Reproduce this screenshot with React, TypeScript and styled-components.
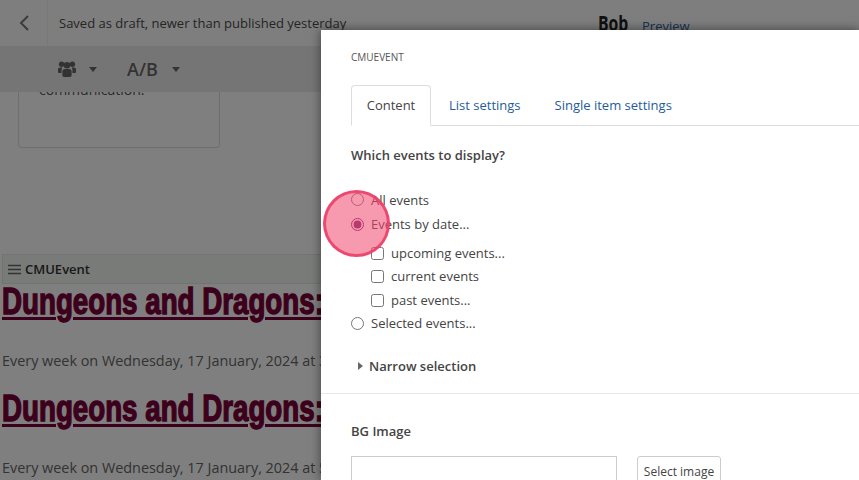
import React from "react";
import styled, { createGlobalStyle } from "styled-components";

const GlobalStyle = createGlobalStyle`
  html, body {
    margin: 0;
    height: 100%;
    overflow: hidden;
    background: #fff;
    font-family: "Open Sans", "Liberation Sans", sans-serif;
  }
`;

/* Page behind the dialog */
const Page = styled.div`
  position: relative;
  width: 859px;
  height: 480px;
  overflow: hidden;
  color: #555;
`;

const TopBar = styled.header`
  display: flex;
  align-items: center;
  height: 46px;
  background: #fdfdfd;
`;

const BackCell = styled.div`
  display: flex;
  align-items: center;
  justify-content: center;
  width: 48px;
  height: 46px;
  border-right: 1px solid #f0f0f0;
  box-sizing: border-box;
`;

const Status = styled.span`
  margin-left: 11px;
  font-size: 13px;
  width: 539px;
  white-space: nowrap;
  color: #4a4a4a;
`;

const Bob = styled.span`
  display: inline-block;
  width: 44px;
  font-size: 21px;
  font-weight: 700;
  color: #222;
  transform: scaleX(0.75);
  transform-origin: left center;
`;

const PreviewLink = styled.a`
  margin-top: 5px;
  font-size: 13px;
  color: #2a64a8;
`;

const ToolBar = styled.div`
  display: flex;
  align-items: center;
  height: 46px;
  padding-left: 58px;
  background: #ebebeb;
  color: #666;
`;

const GroupIcon = styled.svg`
  width: 18px;
  height: 16px;
  fill: #666;
`;

const Caret = styled.span<{ $gap: number }>`
  width: 0;
  height: 0;
  margin-left: ${(p) => p.$gap}px;
  border-left: 4.5px solid transparent;
  border-right: 4.5px solid transparent;
  border-top: 5px solid #666;
`;

const ABLabel = styled.span`
  margin-left: 30px;
  font-size: 18px;
  font-weight: 600;
`;

const Content = styled.main`
  height: 388px;
  overflow: hidden;
`;

const NoteCard = styled.div`
  width: 200px;
  height: 55px;
  margin-left: 18px;
  overflow: hidden;
  border: 1px solid #ddd;
  border-top: 0;
  border-radius: 0 0 4px 4px;
  box-sizing: content-box;
`;

const NoteText = styled.p`
  margin: -12px 0 0 20px;
  font-size: 14px;
  line-height: 20px;
  color: #555;
`;

const BlockBar = styled.div`
  display: flex;
  align-items: center;
  gap: 4px;
  height: 28px;
  margin: 106px 0 0 2px;
  padding-left: 5px;
  background: #f2f6f2;
  border: 1px solid #e4e8e4;
  font-size: 13px;
  line-height: 26px;
  font-weight: 600;
  color: #333;
`;

const MenuIcon = styled.svg`
  width: 13px;
  height: 11px;
  color: #666;
`;

const EventTitle = styled.a`
  display: block;
  margin: 0 0 0 2px;
  height: 36px;
  font-family: "Liberation Sans", sans-serif;
  font-size: 36px;
  line-height: 36px;
  font-weight: 700;
  color: #7a0038;
  text-decoration: underline;
  text-decoration-thickness: 3px;
  text-underline-offset: 3px;
  white-space: nowrap;
  -webkit-text-stroke: 1.4px #7a0038;
  transform: scaleX(0.77);
  transform-origin: left center;
`;

const EventDate = styled.p`
  margin: 31px 0 21px 2px;
  font-size: 14.4px;
  line-height: 19px;
  white-space: nowrap;
  color: #666;
`;

const Scrim = styled.div`
  position: absolute;
  inset: 0;
  background: rgba(0, 0, 0, 0.5);
`;

/* Dialog */
const Dialog = styled.section`
  position: absolute;
  left: 321px;
  top: 30px;
  width: 538px;
  height: 450px;
  background: #fff;
  box-shadow: 0 0 10px rgba(0, 0, 0, 0.5);
  color: #444;
  overflow: hidden;
`;

const DialogHead = styled.div`
  padding: 20px 30px 0;
  font-size: 10px;
  line-height: 14px;
  text-transform: uppercase;
  color: #555;
`;

const Tabs = styled.nav`
  display: flex;
  height: 41px;
  margin: 21px 0 0 30px;
  border-bottom: 1px solid #ddd;
  box-sizing: border-box;
  font-size: 13px;
`;

const Tab = styled.a<{ $active?: boolean; $left?: number }>`
  display: flex;
  align-items: center;
  justify-content: center;
  height: 41px;
  padding-bottom: 2px;
  box-sizing: border-box;
  margin-left: ${(p) => p.$left ?? 0}px;
  color: ${(p) => (p.$active ? "#444" : "#1f5c99")};
  ${(p) =>
    p.$active &&
    `
    width: 80px;
    background: #fff;
    border: 1px solid #ddd;
    border-bottom-color: #fff;
    border-radius: 4px 4px 0 0;
  `}
`;

const Fields = styled.div`
  padding: 0 30px;
`;

const Question = styled.h3`
  margin: 20px 0 0;
  font-size: 13px;
  line-height: 18px;
  font-weight: 600;
  color: #444;
`;

const OptionList = styled.div`
  display: flex;
  flex-direction: column;
  margin-top: 23px;
`;

const OptionRow = styled.label<{ $height: number }>`
  display: flex;
  align-items: center;
  height: ${(p) => p.$height}px;
  font-size: 13px;
  color: #444;
`;

const Radio = styled.input.attrs({ type: "radio" })`
  width: 13px;
  height: 13px;
  margin: 0 7px 0 0;
  accent-color: #732b73;
`;

const SubList = styled.div`
  display: flex;
  flex-direction: column;
  margin: 5px 0 0 20px;
`;

const Check = styled.input.attrs({ type: "checkbox" })`
  width: 13px;
  height: 13px;
  margin: 0 7px 0 0;
`;

const Disclosure = styled.div`
  display: flex;
  align-items: center;
  gap: 6px;
  margin: 24px 0 0 7px;
  font-size: 13px;
  line-height: 18px;
  font-weight: 600;
  color: #444;
`;

const DisclosureArrow = styled.span`
  width: 0;
  height: 0;
  border-top: 4.5px solid transparent;
  border-bottom: 4.5px solid transparent;
  border-left: 5px solid #666;
`;

const Divider = styled.hr`
  margin: 18px 0 0;
  border: 0;
  border-top: 1px solid #e8e8e8;
`;

const ImageField = styled.div`
  padding: 28px 30px 0;
`;

const FieldLabel = styled.div`
  font-size: 13px;
  line-height: 18px;
  font-weight: 600;
  color: #444;
`;

const ImageRow = styled.div`
  display: flex;
  gap: 20px;
  margin-top: 16px;
`;

const TextBox = styled.input`
  width: 266px;
  height: 34px;
  box-sizing: border-box;
  border: 1px solid #ccc;
  padding: 0;
`;

const SelectButton = styled.button`
  width: 84px;
  height: 30px;
  box-sizing: border-box;
  padding: 0;
  background: #fff;
  border: 1px solid #ccc;
  border-radius: 3px;
  font-family: inherit;
  font-size: 12px;
  color: #444;
`;

/* Tutorial hotspot sitting over the radios */
const ClickMarker = styled.div`
  position: absolute;
  left: 323px;
  top: 190px;
  width: 67px;
  height: 67px;
  box-sizing: border-box;
  border: 3px solid rgba(236, 64, 104, 0.9);
  border-radius: 50%;
  background: rgba(240, 70, 110, 0.55);
`;

const noop = () => undefined;

export default function App() {
  return (
    <>
      <GlobalStyle />
      <Page>
        <TopBar>
          <BackCell>
            <svg width="12" height="18" viewBox="0 0 12 18" fill="none" stroke="#777" strokeWidth="2">
              <path d="M10 2 L3 9 L10 16" />
            </svg>
          </BackCell>
          <Status>Saved as draft, newer than published yesterday</Status>
          <Bob>Bob</Bob>
          <PreviewLink>Preview</PreviewLink>
        </TopBar>
        <ToolBar>
          <GroupIcon viewBox="0 0 18 16">
            <circle cx="3.6" cy="3.2" r="2.7" />
            <circle cx="14.4" cy="3.2" r="2.7" />
            <circle cx="9" cy="4.2" r="3.3" />
            <path d="M0 11V8Q0 6.4 2 6.4H4.2Q3.4 8 3.6 12H1Q0 12 0 11Z" />
            <path d="M18 11V8Q18 6.4 16 6.4H13.8Q14.6 8 14.4 12H17Q18 12 18 11Z" />
            <path d="M4.4 14.6V10.6Q4.4 8 7 8H11Q13.6 8 13.6 10.6V14.6Q13.6 16 12 16H6Q4.4 16 4.4 14.6Z" />
          </GroupIcon>
          <Caret $gap={13} />
          <ABLabel>A/B</ABLabel>
          <Caret $gap={14} />
        </ToolBar>
        <Content>
          <NoteCard>
            <NoteText>communication.</NoteText>
          </NoteCard>
          <BlockBar>
            <MenuIcon viewBox="0 0 13 11" fill="none" stroke="currentColor" strokeWidth="1.6">
              <path d="M0 1.5H13M0 5.5H13M0 9.5H13" />
            </MenuIcon>
            CMUEvent
          </BlockBar>
          <EventTitle>Dungeons and Dragons:</EventTitle>
          <EventDate>Every week on Wednesday, 17 January, 2024 at 3</EventDate>
          <EventTitle>Dungeons and Dragons:</EventTitle>
          <EventDate>Every week on Wednesday, 17 January, 2024 at 5</EventDate>
        </Content>
        <Scrim />
        <Dialog>
          <DialogHead>CMUEvent</DialogHead>
          <Tabs>
            <Tab $active>Content</Tab>
            <Tab $left={18}>List settings</Tab>
            <Tab $left={34}>Single item settings</Tab>
          </Tabs>
          <Fields>
            <Question>Which events to display?</Question>
            <OptionList>
              <OptionRow $height={25}>
                <Radio name="events" onChange={noop} />
                All events
              </OptionRow>
              <OptionRow $height={24}>
                <Radio name="events" checked onChange={noop} />
                Events by date...
              </OptionRow>
              <SubList>
                <OptionRow $height={24}>
                  <Check />
                  upcoming events...
                </OptionRow>
                <OptionRow $height={22}>
                  <Check />
                  current events
                </OptionRow>
                <OptionRow $height={26}>
                  <Check />
                  past events...
                </OptionRow>
              </SubList>
              <OptionRow $height={20}>
                <Radio name="events" onChange={noop} />
                Selected events...
              </OptionRow>
            </OptionList>
            <Disclosure>
              <DisclosureArrow />
              Narrow selection
            </Disclosure>
          </Fields>
          <Divider />
          <ImageField>
            <FieldLabel>BG Image</FieldLabel>
            <ImageRow>
              <TextBox readOnly />
              <SelectButton>Select image</SelectButton>
            </ImageRow>
          </ImageField>
        </Dialog>
        <ClickMarker />
      </Page>
    </>
  );
}
